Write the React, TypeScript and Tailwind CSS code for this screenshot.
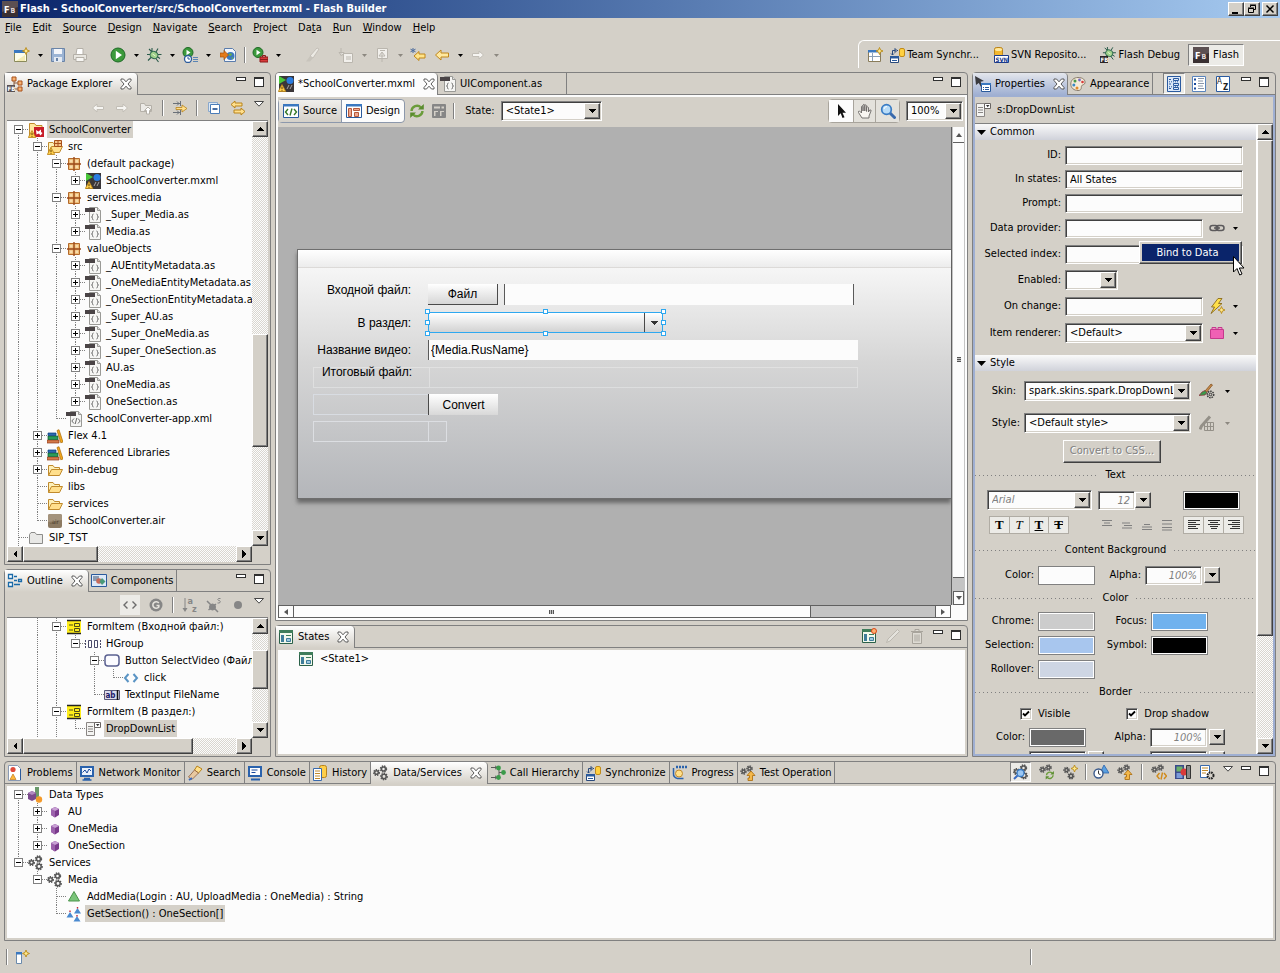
import type { ReactNode } from "react";

/* ─── Icon drawings, all on a 16×16 grid ─── */

const gear = (x: number, y: number, r = 3, c = "#555") => (
  <g>
    <circle cx={x} cy={y} r={r} fill="none" stroke={c} strokeWidth="1.4" strokeDasharray="1.4 1" />
    <circle cx={x} cy={y} r={r - 1} fill="none" stroke={c} strokeWidth="1.5" />
  </g>
);

const gears = (
  <g>
    {gear(3.5, 7.5, 2.8)}
    {gear(10.5, 4, 3)}
    {gear(11, 11.5, 3.2)}
  </g>
);

const sparkle = (x: number, y: number) => (
  <path
    d={`M${x} ${y - 3.5}l1 2.5 2.5 1-2.5 1-1 2.5-1-2.5-2.5-1 2.5-1z`}
    fill="#ffe88a"
    stroke="#b98a1a"
    strokeWidth=".9"
  />
);

const warn = (
  <g>
    <path d="M4 8.5l3.800 7H.3z" fill="#ffcf4a" stroke="#b9831a" strokeWidth=".8" />
    <path d="M4 10.8v2.2M4 13.8v1" stroke="#5a3a00" />
  </g>
);

const sheet = (
  <g>
    <path d="M4.500.500h8l3 3v12h-11z" fill="#f6f6f4" stroke="#9a9a96" />
    <path d="M12.500.500v3h3" fill="#ddd" stroke="#9a9a96" />
    <path d="M0 1h10v4H0z" fill="#4a4446" />
  </g>
);

const pkg = (
  <g>
    <path d="M2.500 2.500h11v11h-11z" fill="#eebd78" stroke="#b4692a" />
    <path d="M8 1v14M1 8h14" stroke="#9c4a1a" strokeWidth="1.400" />
    <path d="M4 4h2.500v2.500H4zM9.500 4H12v2.500H9.500zM4 9.500h2.500V12H4zM9.500 9.500H12V12H9.500z" fill="#f9dcab" />
  </g>
);

const openFolder = (
  <g>
    <path d="M1.500 13.500v-10h4.500l1.500 2h5v2.500" fill="#fdf0b8" stroke="#c08a2c" />
    <path d="M1.500 13.500l3-6h11l-3 6z" fill="#ffdf8c" stroke="#c08a2c" />
  </g>
);

const sync = (
  <g fill="none" strokeWidth="2.400">
    <path d="M2.500 8a5.500 5.500 0 0 1 9.500-3.500" stroke="#6a9c3a" />
    <path d="M13.500 8a5.500 5.500 0 0 1-9.500 3.500" stroke="#6a9c3a" />
    <path d="M9 6.500h5.800V1zM7 9.500H1.200V15z" fill="#5a8c2e" stroke="none" />
  </g>
);

const bug = (
  <g>
    <path d="M3 2l3 3M12 1.500L10 5M1 7.500h4M11 7.500h4.500M2 13.500L5.500 10M9.500 11l3 4M6 1v4M14 11.500L11 9.500" stroke="#2a5a4a" strokeWidth="1.100" />
    <ellipse cx="8" cy="8" rx="4" ry="3.500" fill="#9fd08a" stroke="#2f6b50" transform="rotate(30 8 8)" />
    <path d="M6.500 7l3 2" stroke="#e8f7d8" />
  </g>
);

const play = (
  <g>
    <circle cx="8" cy="8" r="7" fill="#3c9a3c" stroke="#1e6a26" />
    <path d="M5.800 3.800L12 8l-6.200 4.200z" fill="#fff" />
  </g>
);

const miniPlay = (
  <g>
    <circle cx="6" cy="5.500" r="5" fill="#3c9a3c" stroke="#1e6a26" />
    <path d="M4.500 2.800L8.500 5.500l-4 2.700z" fill="#fff" />
  </g>
);

const fb = (
  <g>
    <rect width="16" height="16" fill="#3a3032" />
    <path d="M0 0h16v6L0 11z" fill="#5c5052" />
    <text x="2" y="11.500" fontSize="9" fontWeight="bold" fill="#fff">F</text>
    <text x="8.500" y="11.500" fontSize="7" fontWeight="bold" fill="#e4dcdc">B</text>
  </g>
);

const syncDb = (
  <g>
    <path d="M1.500 9.500h8v6h-8z" fill="#fff" stroke="#2a4a7c" />
    <path d="M1 9h9v2.500H1zM3 13h5v1H3z" fill="#2a5a9c" />
    <path d="M3.500 8V3.500h3M2 6.500l1.500 1.500L5 6.500M6 1.500v4l2-2zM8 3.500h1" fill="none" stroke="#2a4a7c" />
    <rect x="10.500" y="1.500" width="5" height="8" rx="1.500" fill="#ffd040" stroke="#c08a1a" />
  </g>
);

const stateIcon = (
  <g>
    <path d="M1.500 1.500h13v13h-13z" fill="#f2f8ec" stroke="#2a6048" />
    <path d="M1 1h14v3H1z" fill="#3f7d5a" />
    <path d="M3 6h3v7H3z" fill="#3f7d9a" />
    <path d="M8 6.500h5" stroke="#3f7d5a" />
    <path d="M8.500 9.500h4v3h-4z" fill="#9cc8e0" stroke="#3f7d9a" />
  </g>
);

const ICONS: Record<string, ReactNode> = {
  gears,
  fb,
  sync,
  bug,
  play,
  syncDb,
  stateIcon,
  newWizard: (
    <g>
      <path d="M.5 3.500h12v11H.5z" fill="#fdfce8" stroke="#8a8a5a" />
      <path d="M0 3h11v3H0z" fill="#3a78c0" />
      <path d="M2 14l9-6v6z" fill="#f4ecb4" />
      {sparkle(12, 4)}
    </g>
  ),
  save: (
    <g>
      <path d="M1.500 1.500h13v13h-13z" fill="#9cb4d4" stroke="#6a84a8" />
      <path d="M4 2h8v5H4z" fill="#f4f6fa" />
      <path d="M4 10h8v5H4z" fill="#e4eaf2" />
      <path d="M6 11h2v3H6z" fill="#6a84a8" />
    </g>
  ),
  print: (
    <g stroke="#b4b0a8">
      <path d="M5 1.500h6v6H4z" fill="#fff" />
      <path d="M1.500 7.500h13v5h-13z" fill="#e8e6e0" />
      <path d="M4 10.500h8v4H4z" fill="#f8f7f4" />
    </g>
  ),
  profile: (
    <g>
      {miniPlay}
      <circle cx="6" cy="12" r="3.500" fill="#fff" stroke="#2a5a9c" strokeWidth="1.300" />
      <path d="M6 10v2h2" stroke="#2a5a9c" fill="none" />
      <path d="M11 10.500h5M11 12.500h5M11 14.500h5" stroke="#5a84b4" />
    </g>
  ),
  importWeb: (
    <g>
      <path d="M4.500 1.500h8l3 3v10h-11z" fill="#f2f6fc" stroke="#5a7cac" />
      <circle cx="10.500" cy="9" r="4" fill="#3a78c0" />
      <path d="M8 8l2-2 2 1-1 2zM11 11l2-1v2z" fill="#6ab04a" />
      <path d="M0 6h4V3.500L8.500 8 4 12.500V10H0z" fill="#e47a1a" stroke="#a8500a" strokeWidth=".7" />
    </g>
  ),
  external: (
    <g>
      {miniPlay}
      <path d="M8 10h8v5H8z" fill="#d83a3a" stroke="#8c1a1a" />
      <path d="M10.500 10V8.500h3V10M8 12.500h8" fill="none" stroke="#8c1a1a" />
    </g>
  ),
  brush: (
    <g>
      <path d="M13 1l2 1-6 9-3-2z" fill="#eceae4" stroke="#bcb8b0" strokeWidth=".8" />
      <path d="M6 9l3 2-3 3.500H2z" fill="#c8c4bc" />
    </g>
  ),
  stepDown: (
    <g stroke="#bab6ae" fill="#f2f0ec">
      <path d="M5.500 6.500h9v9h-9z" />
      <path d="M3 1v7M1 5.500L3.500 9 6 5.500zM8 10h5M8 12h5" />
    </g>
  ),
  stepUp: (
    <g stroke="#bab6ae" fill="#f2f0ec">
      <path d="M3.500 1.500h10v10h-10z" />
      <path d="M8 15V6M5 9l3-4 3 4zM6 3.500h5" />
    </g>
  ),
  arrowStar: (
    <g>
      <path d="M4 9l5-4.500V7h6v4H9v2.500z" fill="#ffe48a" stroke="#c0861a" />
      <path d="M3 1v5M.5 2.200l5 2.600M5.500 2.200l-5 2.600" stroke="#4a6a9c" />
    </g>
  ),
  arrowLeft: <path d="M1.500 8L7 3v3h7.500v4H7v3z" fill="#ffe9a0" stroke="#c0861a" />,
  arrowLeftDim: <path d="M2.500 8L7 4v2.500h6.500v3H7V12z" fill="#f6f5f2" stroke="#c2beb6" />,
  arrowRightDim: <path d="M13.500 8L9 4v2.500H2.500v3H9V12z" fill="#f6f5f2" stroke="#c2beb6" />,
  upFolder: (
    <g stroke="#b4b0a8" fill="#eceae6">
      <path d="M2.500 11.500v-8h4l1 2h6v6z" />
      <path d="M8.500 14V10.500h-2L10 7l3.500 3.500h-2V14z" fill="#fff" />
    </g>
  ),
  focusTask: (
    <g>
      <path d="M1 3.500h7M5 1.500l2 2-2 2M1 12.500h7M5 10.500l2 2-2 2M8.500 1v5M8.500 10v5" stroke="#6a7078" fill="none" />
      <path d="M4 7.500h6V5l5 3.500-5 3.500V9.500H4z" fill="#ffdf8c" stroke="#b9831a" strokeWidth=".8" />
    </g>
  ),
  collapseAll: (
    <g stroke="#4a7cb8">
      <path d="M2.500 2.500h9v9h-9z" fill="#dce8f4" stroke="#8aa8cc" />
      <path d="M4.500 4.500h9v9h-9z" fill="#fff" />
      <path d="M6.500 9h5" strokeWidth="1.600" stroke="#1a4a8c" />
    </g>
  ),
  linkEditor: (
    <g fill="#ffdf8c" stroke="#b9831a">
      <path d="M1 4.500L5 1v2h7v3H5v2z" />
      <path d="M15 11.500L11 8v2H4v3h7v2z" />
    </g>
  ),
  perspective: (
    <g>
      <path d="M1.500 3.500h12v11h-12z" fill="#fff" stroke="#8a7c5a" />
      <path d="M1 3h10v2.500H1z" fill="#3a78c0" />
      <path d="M5.500 6v8M2 9.500h11" stroke="#8aa0b8" />
      {sparkle(12.5, 4)}
    </g>
  ),
  svn: (
    <g>
      <rect x="1.500" y=".5" width="8" height="9" rx="2" fill="#f4b830" stroke="#b9831a" />
      <ellipse cx="5.500" cy="2.500" rx="3.500" ry="1.500" fill="#ffe9a0" />
      <path d="M1.500 8.500h14v7h-14z" fill="#fff" stroke="#1a3a8c" />
      <text x="2.500" y="14.500" fontSize="6" fontWeight="bold" fill="#1a3a8c">SVN</text>
    </g>
  ),
  flashDebug: (
    <g>
      <g transform="translate(2 -1) scale(.9)">{bug}</g>
      <path d="M0 9h8v7H0z" fill="#2a2426" />
      <text x=".5" y="15" fontSize="6" fontWeight="bold" fill="#fff">FB</text>
    </g>
  ),
  pkgExplorer: (
    <g>
      <path d="M5 1h4v4H5zM11 5h4v4h-4zM11 11h4v4h-4z" fill="#f6b070" stroke="#a8501a" />
      <path d="M7 5v8h4M7 7h4" fill="none" stroke="#8a5a3a" />
      <path d="M0 9h8v7H0z" fill="#5a5254" />
      <text x=".5" y="15" fontSize="6" fontWeight="bold" fill="#fff">FB</text>
    </g>
  ),
  project: (
    <g>
      <path d="M1.500 13.500v-12h5l1.500 2h6v10z" fill="#ffe9a0" stroke="#c08a2c" />
      <path d="M6 5h10v10H6z" fill="#c81e2a" />
      <path d="M8 8l2.500 1.500L13 7.500v2.500l1.500 1-2 2.500-1.500-2-2.500 1z" fill="#fff" />
      {warn}
    </g>
  ),
  srcFolder: (
    <g>
      {openFolder}
      <path d="M7.500 1.500h7v6h-7z" fill="#f6c68a" stroke="#a8501a" />
      <path d="M11 1v7M7 4.500h8" stroke="#a8501a" />
      {warn}
    </g>
  ),
  pkg,
  mxml: (
    <g>
      <path d="M1 0h15v16H1z" fill="#3a3638" />
      <path d="M1 0l7 4-7 4z" fill="#4ac83a" />
      <circle cx="12" cy="4.500" r="3.500" fill="#2a7ce0" />
      <path d="M9 13l2-4M12 13l2-4" stroke="#a8a4a6" />
      {warn}
    </g>
  ),
  as: (
    <g>
      {sheet}
      <path d="M8.500 7q-1 0-1 1.500T6.500 10q1 0 1 1.500t1 1.500M11.500 7q1 0 1 1.500t1 1.500q-1 0-1 1.500t-1 1.500" fill="none" stroke="#6a6a6a" />
    </g>
  ),
  xml: (
    <g>
      {sheet}
      <path d="M8 7.500L5.800 10 8 12.500M12 7.500l2.200 2.500L12 12.500M10.800 7l-1.600 6" fill="none" stroke="#6a6a6a" />
    </g>
  ),
  library: (
    <g>
      <path d="M0 12h12v3H0z" fill="#d47a4a" stroke="#8c3a1a" strokeWidth=".7" />
      <path d="M1 8h10v3.500H1z" fill="#2a9a5a" stroke="#0a5a2a" strokeWidth=".7" />
      <path d="M1 5h8v2.500H1z" fill="#2a6ab0" stroke="#0a3a7c" strokeWidth=".7" />
      <path d="M10 2.500l2-.8L16 14l-2.200.8z" fill="#f4a81a" stroke="#a86a0a" strokeWidth=".7" />
    </g>
  ),
  folder: openFolder,
  air: (
    <g>
      <rect x="1" y="1" width="14" height="14" rx="2" fill="#8c7a62" />
      <path d="M1 3q0-2 2-2h10q2 0 2 2v4L1 9z" fill="#a4937c" />
      <text x="3" y="11" fontSize="6" fill="#4a3a2a">.air</text>
    </g>
  ),
  closedProject: (
    <path d="M1.500 13.500v-9l1.500-2h4l1.500 2h6v9z" fill="#e8e8e6" stroke="#8c8c8a" />
  ),
  outline: (
    <g stroke="#1a6aa8" fill="#fff">
      <path d="M1.500 1.500h4v4h-4zM1.500 9.500h4v4h-4z" strokeWidth="1.300" />
      <path d="M7 3.500h3M7 11.500h6M11.500 6.500h3v2h-3zM7 7.500h3" strokeWidth="1.300" />
    </g>
  ),
  components: (
    <g>
      <path d="M.5 1.500h15v12H.5z" fill="#dce8f8" stroke="#2a5a9c" />
      <path d="M2 3h6v5H2z" fill="#8a9ab0" />
      <circle cx="8" cy="8" r="2.800" fill="#c86a5a" />
      <path d="M11 5l3.500 3.500L11 12 8.500 8.500z" fill="#4a9a7a" />
    </g>
  ),
  tag: <path d="M5.500 4.500L2 8l3.500 3.500M10.500 4.500L14 8l-3.500 3.500" fill="none" stroke="#6c6c6c" strokeWidth="1.400" />,
  tagBlue: <path d="M5.500 4L2 8l3.500 4M10.500 4L14 8l-3.500 4" fill="none" stroke="#5a94c4" strokeWidth="2" />,
  classC: (
    <g>
      <circle cx="8" cy="8" r="6.500" fill="#868686" />
      <path d="M10.800 6A3.300 3.300 0 1 0 10.800 10V8.500H8.500" fill="none" stroke="#e4e2dc" strokeWidth="1.600" />
    </g>
  ),
  sortAz: (
    <g fill="#868686">
      <path d="M2.500 1h1v10h2L3 15 .5 11h2z" />
      <text x="5.500" y="7" fontSize="9" fontWeight="bold">a</text>
      <text x="10" y="15" fontSize="9" fontWeight="bold">z</text>
    </g>
  ),
  hideStatic: (
    <g stroke="#868686" fill="none">
      <circle cx="6.500" cy="10" r="3" fill="#868686" />
      <path d="M1 4l11 11M2.500 13L10 7" strokeWidth="1.500" />
      <path d="M14.500 1.500h-2q-1.500 1.500 0 2h1q1.500 1 0 2.500h-2" />
    </g>
  ),
  dot: <circle cx="8" cy="8" r="4" fill="#868686" />,
  formItem: (
    <g>
      <path d="M1 2h14v12H1z" fill="#ffee1a" />
      <path d="M1 1.500h14M1 14.500h14" stroke="#222" strokeWidth="1.500" />
      <path d="M3 6h4M8.500 4.500h5v3h-5zM3 11h4M8.500 9.500h5v3h-5z" stroke="#4a4a1a" fill="none" />
    </g>
  ),
  hgroup: (
    <g fill="none" stroke="#4a4a6a">
      <path d="M3.500 4.500h3v7h-3zM9.500 4.500h3v7h-3z" fill="#fff" />
      <path d="M.5 4v8M15.500 4v8" strokeDasharray="2 1" />
    </g>
  ),
  button: <rect x="1" y="2" width="14" height="11" rx="3" fill="#fbfbff" stroke="#5a6090" strokeWidth="1.500" />,
  textInput: (
    <g>
      <path d="M.5 3.500h15v9H.5z" fill="#dcdcec" stroke="#5a5a7a" />
      <text x="1.500" y="11" fontSize="8" fontWeight="bold" fill="#1a1a6a">ab</text>
      <path d="M13.500 3v10" stroke="#111" strokeWidth="1.500" />
    </g>
  ),
  dropDown: (
    <g>
      <path d="M1.500 1.500h8v13h-8z" fill="#f4f4f2" stroke="#8a8684" />
      <path d="M3 5.500h5M3 8h5M3 10.500h5" stroke="#8a8684" />
      <path d="M9.500 1.500h6v5h-6z" fill="#fff" stroke="#6a6664" />
      <path d="M11 3h3.500L12.700 5.200z" fill="#333" />
    </g>
  ),
  source: (
    <g>
      <path d="M.5 1.500h15v13H.5z" fill="#fff" stroke="#2a5a9c" />
      <path d="M0 1h16v2.500H0z" fill="#3a78c0" />
      <path d="M5 6L2.500 9 5 12M11 6l2.500 3L11 12M9 5.500L7 12.500" fill="none" stroke="#3a7a2a" strokeWidth="1.400" />
    </g>
  ),
  design: (
    <g>
      <path d="M.5 1.500h15v13H.5z" fill="#fff" stroke="#2a5a9c" />
      <path d="M0 1h16v2.500H0z" fill="#3a78c0" />
      <path d="M2.500 5.500h3v8h-3zM7.500 5.500h6v2h-6zM8.500 9.500h4v4h-4z" fill="#f0a890" stroke="#b4583a" />
    </g>
  ),
  skins: (
    <g>
      <rect x="1" y="1" width="14" height="14" rx="1" fill="#868686" />
      <path d="M3 3.500h6v2H3zM10.500 3.500h2.500v2h-2.500zM3 8h4v1H3zM9 8h4v1H9zM3 9v4h1.500V9zM9 9v4h1.500V9z" fill="#d4d0c8" />
    </g>
  ),
  cursor: (
    <path d="M5 1v12l2.700-2.700L9.500 15l2-.8-2-4.400H13z" fill="#111" />
  ),
  hand: (
    <path
      d="M5 15L1.500 9.500Q1 8 2.500 8L4.500 10V3.500Q5.200 2 6 3.500V8 2Q7 .5 7.800 2v6V2.500Q9 1 9.600 2.500V8.500 4.500q1-1.200 1.900 0V9l1.200-2q1.800-.5 1.300 1L12 13v2z"
      fill="#f8f6f2"
      stroke="#6a6664"
      strokeWidth=".9"
    />
  ),
  magnifier: (
    <g>
      <path d="M9.500 9.500l5 5" stroke="#3a6aac" strokeWidth="3" strokeLinecap="round" />
      <circle cx="6.500" cy="6.500" r="4.800" fill="#b8dcf8" stroke="#3a7cc4" strokeWidth="1.700" />
      <path d="M4 6a3 3 0 0 1 3-2.500" fill="none" stroke="#fff" />
    </g>
  ),
  newState: (
    <g>
      {stateIcon}
      <circle cx="13" cy="3" r="2.500" fill="#ffb070" stroke="#d8481a" />
    </g>
  ),
  pencil: <path d="M12.500 1.500l2 2L5 13l-3.500 1.500L3 11z" fill="#e4e2dc" stroke="#bcb8b0" />,
  trash: (
    <g stroke="#a8a49c" fill="#dedbd4">
      <path d="M3.500 4.500h9v11h-9z" />
      <path d="M2 3.500h12M6 3V1.500h4V3M6 6.500v7M8 6.500v7M10 6.500v7" />
    </g>
  ),
  properties: (
    <g>
      <path d="M0 0l9 5-3.500.8L8 10 6 11 3.800 7 1 9z" fill="#3a3a3e" />
      <path d="M6.500 7.500h9v8h-9z" fill="#fff" stroke="#2a5a9c" />
      <path d="M6 7h10v2H6z" fill="#3a78c0" />
      <path d="M8 11.500h1M10 11.500h4M8 13.500h1M10 13.500h4" stroke="#2a5a9c" />
    </g>
  ),
  palette: (
    <g>
      <path d="M8 1.500c5 0 7.500 2.500 7 5.500-.5 2-3 1.500-3.500 3S12 14.500 8 14.500 .8 12 .8 8 4 1.500 8 1.500z" fill="#f4ead8" stroke="#8a7c6c" />
      <circle cx="5" cy="5" r="1.500" fill="#4a9a4a" />
      <circle cx="9.500" cy="4" r="1.400" fill="#7a6ac0" />
      <circle cx="3.800" cy="9" r="1.500" fill="#3a8ac8" />
      <circle cx="7" cy="12" r="1.500" fill="#e48a2a" />
      <circle cx="12.500" cy="6" r="1.300" fill="#d83a3a" />
    </g>
  ),
  category: (
    <g fill="none" stroke="#2a5aa0">
      <path d="M1.500.500h13v15h-13z" fill="#dce8f8" />
      <path d="M3 3.500h2M7.500 2.500h5v2h-5zM3 8h2M7.500 7.500h5v2h-5zM3 12.500h2M7.500 11.500h5v2h-5z" />
      <path d="M3 5.800h10M3 10.800h10" strokeDasharray="1 1" />
    </g>
  ),
  listView: (
    <g>
      <path d="M1.500.500h13v15h-13z" fill="#fff" stroke="#5a84bc" />
      <path d="M3 3.500h2M3 8h2M3 12.500h2" stroke="#1a4a9c" strokeWidth="2" />
      <path d="M7 2.500h6M7 5h5M7 7.500h6M7 10h5M7 12.500h6" stroke="#8a96a8" />
    </g>
  ),
  alphaView: (
    <g>
      <path d="M1.500.500h13v15h-13z" fill="#fff" stroke="#2a5aa0" />
      <text x="2" y="8" fontSize="8" fill="#222">A</text>
      <text x="8" y="14" fontSize="8" fontWeight="bold" fill="#222">Z</text>
    </g>
  ),
  link: (
    <g fill="none" stroke="#5c5a5c" strokeWidth="1.500">
      <rect x="1" y="5.500" width="8" height="5" rx="2.500" />
      <rect x="7" y="5.500" width="8" height="5" rx="2.500" />
      <path d="M5 8h6" />
    </g>
  ),
  lightning: (
    <g>
      <path d="M9 .5h4L9.500 5.500H13L2 15.500 5.500 9H2.500z" fill="#ffe04a" stroke="#8a6a1a" strokeWidth=".9" />
      {sparkle(12.5, 12)}
    </g>
  ),
  brick: (
    <g>
      <path d="M1.500 4.500h13v9h-13z" fill="#f060b4" stroke="#c43a8c" />
      <path d="M3 2.500h4v2H3zM9 2.500h4v2H9z" fill="#f890cc" stroke="#c43a8c" />
    </g>
  ),
  paintGear: (
    <g>
      <path d="M12 1L6 8l1.500 1.500L13.500 2z" fill="#c88a4a" stroke="#7a4a1a" strokeWidth=".7" />
      <path d="M6 7.500L8 9.500 6 12 0 12.500 3 9z" fill="#3a9a4a" stroke="#8c2a3a" strokeWidth=".7" />
      <circle cx="11.500" cy="11.500" r="3.200" fill="#d4d0c8" stroke="#333" strokeWidth="1.500" strokeDasharray="1.500 .9" />
      <circle cx="11.500" cy="11.500" r="1.300" fill="none" stroke="#333" />
    </g>
  ),
  pencilGrid: (
    <g stroke="#949088" fill="none">
      <path d="M11 1.500L2.500 11 1 14.500" strokeWidth="3" />
      <path d="M5.500 7.500h9v8h-9zM8.500 8v7M11.500 8v7M5 11.500h10" />
    </g>
  ),
  problems: (
    <g>
      <path d="M1.500.500h9l3 3v12h-12z" fill="#fff" stroke="#8a9ab4" />
      <circle cx="6" cy="4.500" r="2.600" fill="#e04a3a" />
      <path d="M6 9l3 5.500H3z" fill="#ffb83a" stroke="#c07a1a" strokeWidth=".7" />
      <path d="M13.500 4v11" stroke="#2a5a9c" />
    </g>
  ),
  monitor: (
    <g>
      <path d="M1 1h14v11H1z" fill="#2a62ac" />
      <path d="M3 3h10v7H3z" fill="#eaf2fc" />
      <path d="M3.500 7.500L6 5l2 3 2-4 2 2" fill="none" stroke="#1a4a9c" />
      <path d="M5 13.500h6M3.500 15h9" stroke="#2a62ac" strokeWidth="1.300" />
    </g>
  ),
  search: (
    <g>
      <path d="M10 1l5 3-3.500 4-4-3z" fill="#ffe08a" stroke="#b9831a" />
      <path d="M7.500 5l4 3L5 14.500 1.500 12z" fill="#e8c8a0" stroke="#8a5a3a" strokeWidth=".8" />
      <path d="M2 15l3-2" stroke="#3a6ac0" strokeWidth="2" />
    </g>
  ),
  console: (
    <g>
      <path d="M1 1h14v11H1z" fill="#2a62ac" />
      <path d="M3 3h10v7H3z" fill="#fff" />
      <path d="M4.500 5h6M4.500 7.500h4" stroke="#1a4a9c" />
      <path d="M4 14.500h9" stroke="#2a62ac" strokeWidth="2" />
    </g>
  ),
  history: (
    <g>
      <rect x="7.500" y=".5" width="7" height="12" rx="2" fill="#ffcf4a" stroke="#b9831a" />
      <path d="M1.500 3.500h8v12h-8z" fill="#fff" stroke="#3a6aac" />
      <path d="M3 6h5M3 8.500h5M3 11h5M3 13.500h5" stroke="#c08a2c" />
    </g>
  ),
  hierarchy: (
    <g>
      <path d="M1 2.500h6M5 .8L7 2.500 5 4.200M9 3v9M9 7.500h4M1 12.500h6M5 10.800l2 1.700-2 1.700" fill="none" stroke="#5a5a5a" />
      <circle cx="8.500" cy="3" r="2.400" fill="#3a9a4a" />
      <circle cx="13.500" cy="7.500" r="2.400" fill="#3a9a4a" />
      <circle cx="8.500" cy="12.500" r="2.400" fill="#3a9a4a" />
    </g>
  ),
  progress: (
    <g>
      <path d="M11.500 13.500h-6a4.500 4.500 0 0 1-4-5V3" fill="none" stroke="#2a62ac" strokeWidth="1.500" />
      <circle cx="7" cy="8.500" r="3.500" fill="#ffe08a" stroke="#c08a2c" />
      <path d="M4 2h12" stroke="#2a62ac" strokeWidth="2.400" strokeDasharray="2 1" />
    </g>
  ),
  testOp: (
    <g>
      {gear(3.5, 6.5, 2.5)}
      {gear(9.5, 3.5, 2.6)}
      <path d="M8 15.500h4.500V10.500H15L11 6 7 10.500h2.500V13H8z" fill="#f4b84a" stroke="#a86a0a" strokeWidth=".8" />
    </g>
  ),
  gearsFind: (
    <g>
      {gears}
      <path d="M1 15l4-4" stroke="#3a6ac0" strokeWidth="2" />
      <circle cx="7.500" cy="9" r="3.500" fill="#9cc8f4" stroke="#3a7cc4" strokeWidth="1.300" />
    </g>
  ),
  gearsSync: (
    <g>
      {gear(3.5, 5.5, 2.6)}
      {gear(9.5, 3.5, 2.6)}
      <g transform="translate(6 6.500) scale(.6)">{sync}</g>
    </g>
  ),
  gearsNew: (
    <g>
      {gear(3.5, 6, 2.6)}
      {gear(8, 12, 2.8)}
      {sparkle(11.5, 4.5)}
    </g>
  ),
  typeClock: (
    <g>
      <path d="M11 1l5 8H7z" fill="#5aa0e0" stroke="#2a62ac" strokeWidth=".8" />
      <circle cx="5.500" cy="9.500" r="4.500" fill="#fff" stroke="#3a5a8c" strokeWidth="1.400" />
      <path d="M5.500 6.500v3.200l2 1" fill="none" stroke="#333" />
    </g>
  ),
  gearsCode: (
    <g>
      {gear(3.5, 5.5, 2.6)}
      {gear(9.5, 3.5, 2.6)}
      <path d="M8.500 9L6 12l2.500 3M13 9l2.500 3-2.500 3M11.500 8.500l-1.500 7" fill="none" stroke="#d08a1a" strokeWidth="1.400" />
    </g>
  ),
  filmstrip: (
    <g>
      <path d="M0 1h9v14H0z" fill="#3a4a8c" />
      <path d="M1.500 2.500h6v5h-6z" fill="#6ab06a" />
      <path d="M1.500 9h6v5h-6z" fill="#7a9ad8" />
      <circle cx="9" cy="8" r="3.500" fill="#d83a3a" />
      <path d="M11.500 1.500h4v13h-4z" fill="#888" stroke="#333" />
    </g>
  ),
  docGear: (
    <g>
      <path d="M1.500 1.500h9v12h-9z" fill="#fff" stroke="#3a6aac" />
      <path d="M3 4h6M3 6.500h6M3 9h4" stroke="#c08a2c" />
      <circle cx="11.500" cy="11.500" r="3" fill="#d4d0c8" stroke="#222" strokeWidth="2" strokeDasharray="1.600 .8" />
    </g>
  ),
  dataTypes: (
    <g>
      <path d="M7 0h4v9q0 2-2 2H7z" fill="#6a9a6a" />
      <path d="M0 6l4-2 4 2v6l-4 2-4-2z" fill="#7a4a8c" />
      <path d="M0 6l4 2 4-2-4-2z" fill="#b08ac0" />
      <circle cx="11" cy="12.500" r="3.200" fill="#f49a2a" />
    </g>
  ),
  cube: (
    <g>
      <path d="M4 5l4-2 4 2v6l-4 2.500L4 11z" fill="#7a3a8c" />
      <path d="M4 5l4 2v6.500L4 11z" fill="#9c62ac" />
      <path d="M4 5l4 2 4-2-4-2z" fill="#c8a0d4" />
    </g>
  ),
  operation: <path d="M8 2.500l5.500 9.500h-11z" fill="#7ac47a" stroke="#4a944a" />,
  typedOperation: (
    <g fill="#4a8ad0">
      <path d="M4 6l3.500 5.500h-7zM11 10l3.500 5.500h-7zM11.500 2l3.500 5.500H8z" />
      <path d="M3.300 5.200h1.400M10.800 1.700h1.400M10.300 9.800h1.400" stroke="#c8283a" strokeWidth="1.400" />
    </g>
  ),
  fastView: (
    <g>
      <path d="M2.500 3.500h5v11h-5z" fill="#fff" stroke="#6a8aac" />
      <path d="M2 3h6v2.500H2z" fill="#3a78c0" />
      {sparkle(12, 4.5)}
    </g>
  ),
};

function Icon({ name }: { name: string }) {
  return (
    <svg viewBox="0 0 16 16" className="size-4 shrink-0" aria-hidden="true">
      {ICONS[name]}
    </svg>
  );
}

/* ─── Small shared controls ─── */

const RAISED = "border border-t-white border-l-white border-r-[#404040] border-b-[#404040] bg-[#d4d0c8] shadow-[inset_-1px_-1px_#808080]";
const SUNKEN = "border border-t-[#808080] border-l-[#808080] border-r-white border-b-white bg-[#fcfcfc] shadow-[inset_1px_1px_#404040,inset_-1px_-1px_#d4d0c8]";
const PRESSED = "border border-t-[#808080] border-l-[#808080] border-r-white border-b-white bg-[#ecebe7]";
const TRACK = "bg-[repeating-conic-gradient(#fcfcfc_0_25%,#d9d6cf_0_50%)] bg-[length:2px_2px]";

const ARROWS = {
  up: "M4 10h8L8 6z",
  down: "M4 6h8l-4 4z",
  left: "M10 4v8L6 8z",
  right: "M6 4v8l4-4z",
};

function Arrow({ dir, color = "#000" }: { dir: keyof typeof ARROWS; color?: string }) {
  return (
    <svg viewBox="0 0 16 16" className="size-4 shrink-0" aria-hidden="true" shapeRendering="crispEdges">
      <path d={ARROWS[dir]} fill={color} />
    </svg>
  );
}

function IconButton({ icon, label, className = "" }: { icon: string; label: string; className?: string }) {
  return (
    <button type="button" aria-label={label} className={`flex shrink-0 items-center justify-center ${className}`}>
      <Icon name={icon} />
    </button>
  );
}

function MenuArrow({ label, dim }: { label: string; dim?: boolean }) {
  return (
    <button type="button" aria-label={label} className="flex h-4 w-2 shrink-0 items-center justify-center">
      <svg viewBox="0 0 5 3" className="h-[3px] w-[5px]" aria-hidden="true">
        <path d="M0 0h5L2.500 3z" fill={dim ? "#8c8880" : "#000"} />
      </svg>
    </button>
  );
}

function Separator({ className = "" }: { className?: string }) {
  return <span className={`h-4 w-0.5 shrink-0 border-l border-[#808080] bg-white ${className}`} />;
}

function MinMax() {
  return (
    <span className="flex shrink-0 items-start gap-2 pr-1.5">
      <button type="button" aria-label="Minimize" className="h-1 w-2.5 border border-[#303030] bg-white" />
      <button type="button" aria-label="Maximize" className="h-2.5 w-2.5 border border-t-2 border-[#303030] bg-white" />
    </span>
  );
}

function ViewMenu() {
  return (
    <button type="button" aria-label="View menu" className="shrink-0">
      <svg viewBox="0 0 10 6" className="h-1.5 w-2.5" aria-hidden="true">
        <path d="M.5.500h9L5 5.200z" fill="#fff" stroke="#333" strokeWidth=".9" />
      </svg>
    </button>
  );
}

type TabProps = { icon: string; label: string; active?: boolean; closable?: boolean; tone?: "white" | "gray" | "blue"; pad?: string };

const TONES = {
  white: "bg-[#fcfcfc]",
  gray: "bg-linear-to-b from-white to-[#d4d0c8]",
  blue: "bg-linear-to-b from-[#e4e6ec] to-[#9fafd2]",
};

function Tab({ icon, label, active, closable, tone = "gray", pad = "pr-[3px]" }: TabProps) {
  return (
    <button
      type="button"
      role="tab"
      aria-selected={!!active}
      className={`flex h-[22px] shrink-0 items-center gap-1 border-r border-[#808080] pl-0.5 whitespace-nowrap ${pad} ${active ? `${TONES[tone]} rounded-tr-sm` : "border-b"}`}
    >
      <Icon name={icon} />
      <span>{label}</span>
      {closable && (
        <svg viewBox="0 0 12 12" className="mr-0.5 ml-1 size-3 shrink-0" aria-hidden="true">
          <path d="M1 1h2.500L6 3.800 8.500 1H11v1.500L8 6l3 3.500V11H8.500L6 8.200 3.500 11H1V9.500L4 6 1 2.500z" fill="#fff" stroke="#4a4a4a" strokeWidth=".9" />
        </svg>
      )}
    </button>
  );
}

function TabStrip({ tabs, children }: { tabs: TabProps[]; children?: ReactNode }) {
  return (
    <div className="flex h-[22px] shrink-0" role="tablist">
      {tabs.map((t) => (
        <Tab key={t.label} {...t} />
      ))}
      <div className="flex min-w-0 flex-1 items-start justify-end gap-2 border-b border-[#808080] pt-1">{children ?? <MinMax />}</div>
    </div>
  );
}

type BarProps = { before: string; thumb: string; label: string };

function VBar({ before, thumb, label }: BarProps) {
  return (
    <div role="scrollbar" aria-label={label} aria-valuenow={0} aria-controls="workbench" className={`flex w-4 shrink-0 flex-col ${TRACK}`}>
      <button type="button" aria-label="Scroll up" className={`flex h-4 shrink-0 items-center justify-center ${RAISED}`}>
        <Arrow dir="up" />
      </button>
      <div className="min-h-0 flex-1">
        <div className={before} />
        <div className={`${RAISED} ${thumb}`} />
      </div>
      <button type="button" aria-label="Scroll down" className={`flex h-4 shrink-0 items-center justify-center ${RAISED}`}>
        <Arrow dir="down" />
      </button>
    </div>
  );
}

function HBar({ thumb, label }: { thumb: string; label: string }) {
  return (
    <div className="flex h-4 shrink-0 pr-4">
      <div role="scrollbar" aria-label={label} aria-valuenow={0} aria-controls="workbench" className={`flex flex-1 ${TRACK}`}>
        <button type="button" aria-label="Scroll left" className={`flex w-4 shrink-0 items-center justify-center ${RAISED}`}>
          <Arrow dir="left" />
        </button>
        <div className="flex flex-1">
          <div className={`${RAISED} ${thumb}`} />
        </div>
        <button type="button" aria-label="Scroll right" className={`flex w-4 shrink-0 items-center justify-center ${RAISED}`}>
          <Arrow dir="right" />
        </button>
      </div>
    </div>
  );
}

/* ─── Trees ─── */

type Node = { d: number; icon: string; label: string; box?: "+" | "-"; selected?: boolean };

// Is there another row at this depth further down, before the branch ends?
function continues(rows: Node[], i: number, depth: number, open: number[]) {
  for (let k = i + 1; k < rows.length; k++) {
    if (rows[k].d < depth) return false;
    if (rows[k].d === depth) return true;
  }
  return open.includes(depth);
}

function Tree({ rows, label, open = [], from = 0 }: { rows: Node[]; label: string; open?: number[]; from?: number }) {
  return (
    <ul role="tree" aria-label={label} className="min-w-0 flex-1 overflow-hidden bg-[#fcfcfc] pl-0.5">
      {rows.map((row, i) => (
        <li key={i} role="treeitem" aria-selected={!!row.selected} className="flex h-[17px] items-center whitespace-nowrap">
          {Array.from({ length: row.d + 1 }, (_, depth) => {
            const own = depth === row.d;
            const down = continues(rows, i, depth, open);
            const first = own && i === 0 && from === 0;
            return (
              <svg key={depth} viewBox="0 0 19 17" className="h-[17px] w-[19px] shrink-0" aria-hidden="true" shapeRendering="crispEdges">
                <g stroke="#808080" strokeDasharray="1 1">
                  {((own && !first) || (!own && down)) && <path d="M9.500 0v9" />}
                  {down && <path d="M9.500 8v9" />}
                  {own && <path d="M10 8.500h9" />}
                </g>
                {own && row.box && (
                  <g stroke="#808080">
                    <path d="M5.500 4.500h8v8h-8z" fill="#fff" />
                    <path d={row.box === "+" ? "M7 8.500h5M9.500 6v5" : "M7 8.500h5"} stroke="#000" />
                  </g>
                )}
              </svg>
            );
          })}
          <Icon name={row.icon} />
          <span className={`ml-[3px] px-0.5 leading-[17px] ${row.selected ? "bg-[#d4d0c8]" : ""}`}>{row.label}</span>
        </li>
      ))}
    </ul>
  );
}

const PACKAGES: Node[] = [
  { d: 0, icon: "project", label: "SchoolConverter", box: "-", selected: true },
  { d: 1, icon: "srcFolder", label: "src", box: "-" },
  { d: 2, icon: "pkg", label: "(default package)", box: "-" },
  { d: 3, icon: "mxml", label: "SchoolConverter.mxml", box: "+" },
  { d: 2, icon: "pkg", label: "services.media", box: "-" },
  { d: 3, icon: "as", label: "_Super_Media.as", box: "+" },
  { d: 3, icon: "as", label: "Media.as", box: "+" },
  { d: 2, icon: "pkg", label: "valueObjects", box: "-" },
  { d: 3, icon: "as", label: "_AUEntityMetadata.as", box: "+" },
  { d: 3, icon: "as", label: "_OneMediaEntityMetadata.as", box: "+" },
  { d: 3, icon: "as", label: "_OneSectionEntityMetadata.as", box: "+" },
  { d: 3, icon: "as", label: "_Super_AU.as", box: "+" },
  { d: 3, icon: "as", label: "_Super_OneMedia.as", box: "+" },
  { d: 3, icon: "as", label: "_Super_OneSection.as", box: "+" },
  { d: 3, icon: "as", label: "AU.as", box: "+" },
  { d: 3, icon: "as", label: "OneMedia.as", box: "+" },
  { d: 3, icon: "as", label: "OneSection.as", box: "+" },
  { d: 2, icon: "xml", label: "SchoolConverter-app.xml" },
  { d: 1, icon: "library", label: "Flex 4.1", box: "+" },
  { d: 1, icon: "library", label: "Referenced Libraries", box: "+" },
  { d: 1, icon: "folder", label: "bin-debug", box: "+" },
  { d: 1, icon: "folder", label: "libs" },
  { d: 1, icon: "folder", label: "services" },
  { d: 1, icon: "air", label: "SchoolConverter.air" },
  { d: 0, icon: "closedProject", label: "SIP_TST" },
];

const OUTLINE: Node[] = [
  { d: 2, icon: "formItem", label: "FormItem (Входной файл:)", box: "-" },
  { d: 3, icon: "hgroup", label: "HGroup", box: "-" },
  { d: 4, icon: "button", label: "Button SelectVideo (Файл)", box: "-" },
  { d: 5, icon: "tagBlue", label: "click" },
  { d: 4, icon: "textInput", label: "TextInput FileName" },
  { d: 2, icon: "formItem", label: "FormItem (В раздел:)", box: "-" },
  { d: 3, icon: "dropDown", label: "DropDownList", selected: true },
];

const SERVICES: Node[] = [
  { d: 0, icon: "dataTypes", label: "Data Types", box: "-" },
  { d: 1, icon: "cube", label: "AU", box: "+" },
  { d: 1, icon: "cube", label: "OneMedia", box: "+" },
  { d: 1, icon: "cube", label: "OneSection", box: "+" },
  { d: 0, icon: "gears", label: "Services", box: "-" },
  { d: 1, icon: "gears", label: "Media", box: "-" },
  { d: 2, icon: "operation", label: "AddMedia(Login : AU, UploadMedia : OneMedia) : String" },
  { d: 2, icon: "typedOperation", label: "GetSection() : OneSection[]", selected: true },
];

/* ─── Window chrome ─── */

// [before, underlined letter, after]
const MENUS = [
  ["", "F", "ile"],
  ["", "E", "dit"],
  ["", "S", "ource"],
  ["", "D", "esign"],
  ["", "N", "avigate"],
  ["", "S", "earch"],
  ["", "P", "roject"],
  ["Da", "t", "a"],
  ["", "R", "un"],
  ["", "W", "indow"],
  ["", "H", "elp"],
];

function TitleBar() {
  return (
    <header className="flex h-[18px] items-center bg-linear-to-r from-[#0a246a] to-[#a6caf0] px-0.5 text-white">
      <Icon name="fb" />
      <h1 className="ml-0.5 flex-1 font-bold whitespace-nowrap">Flash - SchoolConverter/src/SchoolConverter.mxml - Flash Builder</h1>
      <button type="button" aria-label="Minimize window" className={`h-3.5 w-4 ${RAISED}`}>
        <svg viewBox="0 0 14 12" aria-hidden="true"><path d="M3 9h6v2H3z" /></svg>
      </button>
      <button type="button" aria-label="Restore window" className={`h-3.5 w-4 ${RAISED}`}>
        <svg viewBox="0 0 14 12" aria-hidden="true" fill="none" stroke="#000"><path d="M5.500 4V2.500h5v4H9M3.500 5.500h5v4h-5zM5 2h6M3 5h6" /></svg>
      </button>
      <button type="button" aria-label="Close window" className={`ml-0.5 h-3.5 w-4 ${RAISED}`}>
        <svg viewBox="0 0 14 12" aria-hidden="true" fill="none" stroke="#000" strokeWidth="1.500"><path d="M3.500 2.500l7 7M10.500 2.500l-7 7" /></svg>
      </button>
    </header>
  );
}

function MenuBar() {
  return (
    <nav className="flex h-5 items-center gap-[11px] pl-[5px]">
      {MENUS.map(([a, u, b]) => (
        <button key={a + u + b} type="button">
          {a}
          <span className="underline">{u}</span>
          {b}
        </button>
      ))}
    </nav>
  );
}

function ToolBar() {
  return (
    <div className="flex h-[34px]">
      <div className="flex flex-1 items-center gap-1.5 pl-3.5">
        <IconButton icon="newWizard" label="New" />
        <MenuArrow label="New options" />
        <IconButton icon="save" label="Save" />
        <IconButton icon="print" label="Print" />
        <IconButton icon="play" label="Run" className="ml-4" />
        <MenuArrow label="Run options" />
        <IconButton icon="bug" label="Debug" />
        <MenuArrow label="Debug options" />
        <IconButton icon="profile" label="Profile" />
        <MenuArrow label="Profile options" />
        <IconButton icon="importWeb" label="Export release build" className="mx-0.5" />
        <Separator />
        <IconButton icon="external" label="External tools" />
        <MenuArrow label="External tools options" />
        <IconButton icon="brush" label="Brush" className="ml-4" />
        <IconButton icon="stepDown" label="Next annotation" className="ml-3" />
        <MenuArrow label="Next annotation options" dim />
        <IconButton icon="stepUp" label="Previous annotation" />
        <MenuArrow label="Previous annotation options" dim />
        <IconButton icon="arrowStar" label="Last edit location" />
        <IconButton icon="arrowLeft" label="Back" className="ml-0.5" />
        <MenuArrow label="Back options" />
        <IconButton icon="arrowRightDim" label="Forward" />
        <MenuArrow label="Forward options" dim />
      </div>
      <div className="mt-0.5 mb-1 flex items-center rounded-tl-md border-t border-l border-white pr-9 pl-2">
        <IconButton icon="perspective" label="Open perspective" />
        <button type="button" className="ml-1.5 flex items-center gap-0.5">
          <Icon name="syncDb" />
          Team Synchr...
        </button>
        <button type="button" className="ml-3.5 flex items-center gap-0.5">
          <Icon name="svn" />
          SVN Reposito...
        </button>
        <button type="button" className="ml-3.5 flex items-center gap-0.5">
          <Icon name="flashDebug" />
          Flash Debug
        </button>
        <button type="button" aria-pressed="true" className={`ml-2 flex h-[22px] items-center gap-1 px-1 ${PRESSED}`}>
          <Icon name="fb" />
          Flash
        </button>
      </div>
    </div>
  );
}

function PackageExplorer() {
  return (
    <section className="flex min-h-0 flex-1 flex-col rounded-t border border-[#808080]">
      <TabStrip tabs={[{ icon: "pkgExplorer", label: "Package Explorer", active: true, closable: true }]} />
      <div className="flex min-h-0 flex-1 flex-col px-0.5 pb-0.5">
        <div className="flex h-[26px] shrink-0 items-center justify-end gap-2 border-b border-[#808080] pr-1">
          <IconButton icon="arrowLeftDim" label="Back" />
          <IconButton icon="arrowRightDim" label="Forward" />
          <IconButton icon="upFolder" label="Up" />
          <Separator />
          <IconButton icon="focusTask" label="Focus on active task" />
          <Separator />
          <IconButton icon="collapseAll" label="Collapse all" />
          <IconButton icon="linkEditor" label="Link with editor" />
          <span className="-mt-2"><ViewMenu /></span>
        </div>
        <div className="flex min-h-0 flex-1">
          <Tree rows={PACKAGES} label="Packages" open={[0]} />
          <VBar before="h-1/2" thumb="h-[29%]" label="Packages vertical" />
        </div>
        <HBar thumb="w-[35%]" label="Packages horizontal" />
      </div>
    </section>
  );
}

function Outline() {
  return (
    <section className="flex h-[188px] shrink-0 flex-col rounded-t border border-[#808080]">
      <TabStrip
        tabs={[
          { icon: "outline", label: "Outline", active: true, closable: true },
          { icon: "components", label: "Components" },
        ]}
      />
      <div className="flex min-h-0 flex-1 flex-col px-0.5 pb-0.5">
        <div className="flex h-[26px] shrink-0 items-center justify-end gap-2 border-b border-[#808080] pr-1">
          <IconButton icon="tag" label="Show MXML view" className="h-5 w-5 bg-[#ecebe7]" />
          <IconButton icon="classC" label="Show class view" />
          <Separator />
          <IconButton icon="sortAz" label="Sort" />
          <IconButton icon="hideStatic" label="Hide static" />
          <IconButton icon="dot" label="Hide non-public" />
          <span className="-mt-2"><ViewMenu /></span>
        </div>
        <div className="flex min-h-0 flex-1">
          <Tree rows={OUTLINE} label="Outline" open={[1, 2]} from={1} />
          <VBar before="h-[18%]" thumb="h-[45%]" label="Outline vertical" />
        </div>
        <HBar thumb="w-[80%]" label="Outline horizontal" />
      </div>
    </section>
  );
}

/* ─── Editor ─── */

function Combo({ id, value, className = "", label }: { id?: string; value: string; className?: string; label?: string }) {
  return (
    <span className={`relative flex h-5 items-center ${SUNKEN} ${className}`}>
      <select id={id} aria-label={label} className="h-full w-full appearance-none overflow-hidden bg-transparent pr-4 pl-1 whitespace-nowrap">
        <option>{value}</option>
      </select>
      <span className={`pointer-events-none absolute top-px right-px bottom-px flex w-4 items-center justify-center ${RAISED}`}>
        <Arrow dir="down" />
      </span>
    </span>
  );
}

const HANDLES = ["-top-1 -left-1", "-top-1 left-[calc(50%-3px)]", "-top-1 -right-1", "top-[7px] -left-1", "top-[7px] -right-1", "-bottom-1 -left-1", "-bottom-1 left-[calc(50%-3px)]", "-bottom-1 -right-1"];

const FORM_LABEL = "w-[115px] pr-[17px] text-right whitespace-nowrap";

function DesignForm() {
  return (
    <div className="mt-[122px] ml-[19px] h-[250px] border border-r-0 border-[#6e6e6e] bg-linear-to-b from-[#fcfcfc] via-[#d6d6d6] via-45% to-[#b4b6ba] font-['Liberation_Sans',Arial,sans-serif] text-xs shadow-[0_4px_4px_#6a6a6a]">
      <div className="h-[18px] border-b border-[#dcdad8] bg-linear-to-b from-white to-[#ececec]" />
      <div className="flex flex-col gap-1.5 pt-4 pl-[15px]">
        <div className="flex h-[22px]">
          <label htmlFor="file-name" className={`${FORM_LABEL} -mt-0.5`}>Входной файл:</label>
          <button type="button" className="h-[21px] w-[70px] border-r border-b border-[#4a4a4a] bg-linear-to-b from-white to-[#d6d6d6]">Файл</button>
          <input id="file-name" className="ml-1.5 h-[21px] w-[350px] border-r border-l border-[#5a5a5a] bg-[#fcfcfc]" />
        </div>
        <div className="flex h-[21px] items-center">
          <label htmlFor="section" className={FORM_LABEL}>В раздел:</label>
          <span className="relative flex h-[21px] w-[235px] border border-[#2ea8f0] bg-linear-to-b from-white to-[#d2d2d2]">
            <select id="section" className="w-full appearance-none bg-transparent" />
            <span className="pointer-events-none absolute top-0 right-0 bottom-0 flex w-[18px] items-center justify-center border-l border-[#4a4a4a]">
              <Arrow dir="down" color="#333" />
            </span>
            {HANDLES.map((h) => (
              <span key={h} className={`absolute size-[5px] border border-[#2ea8f0] bg-white ${h}`} />
            ))}
          </span>
        </div>
        <div className="flex h-[22px] items-center">
          <label htmlFor="video-name" className={FORM_LABEL}>Название видео:</label>
          <input id="video-name" defaultValue="{Media.RusName}" className="h-5 w-[430px] border-l border-[#5a5a5a] bg-[#fcfcfc] px-0.5" />
        </div>
        <div className="flex h-[21px] w-[545px] border border-white/30">
          <span className={`${FORM_LABEL} -mt-1`}>Итоговый файл:</span>
          <span className="flex-1 border-l border-white/30" />
        </div>
        <div className="flex h-[21px]">
          <span className="w-[115px] border border-r-0 border-[#d8dce2]" />
          <button type="button" className="w-[70px] border-l border-[#4a4a4a] bg-linear-to-b from-white to-[#d8d8d8]">Convert</button>
        </div>
        <div className="flex h-[21px] w-[134px] border border-[#dcdee2]">
          <span className="w-[115px] border-r border-[#dcdee2]" />
        </div>
      </div>
    </div>
  );
}

function Editor() {
  return (
    <section className="flex min-h-0 flex-1 flex-col overflow-hidden rounded-t border border-[#808080]">
      <TabStrip
        tabs={[
          { icon: "mxml", label: "*SchoolConverter.mxml", active: true, closable: true, tone: "white", pad: "pr-0" },
          { icon: "as", label: "UIComponent.as", pad: "pr-6" },
        ]}
      />
      <div className="flex min-h-0 flex-1 flex-col bg-[#fcfcfc] p-0.5">
        <div className="flex h-[30px] shrink-0 items-center bg-[#d4d0c8] pr-0.5 pb-0.5">
          <div className="flex h-6 rounded border border-[#8c98ac]">
            <button type="button" className="flex items-center gap-1 border-r border-[#8c98ac] bg-linear-to-b from-[#f0efec] to-[#d4d0c8] px-1">
              <Icon name="source" />
              Source
            </button>
            <button type="button" aria-pressed="true" className="flex items-center gap-1 rounded-r bg-[#fcfcfc] px-1">
              <Icon name="design" />
              Design
            </button>
          </div>
          <IconButton icon="sync" label="Refresh" className="ml-1" />
          <IconButton icon="skins" label="Show skins" className="mx-1.5" />
          <Separator />
          <label htmlFor="state" className="mr-1.5 ml-2.5">State:</label>
          <Combo id="state" value="<State1>" className="w-[101px]" />
          <span className="flex-1" />
          <div className="mr-1.5 flex h-6 rounded border border-[#a8a49c]">
            <IconButton icon="cursor" label="Select" className="w-6 bg-[#fcfcfc]" />
            <IconButton icon="hand" label="Pan" className="w-[23px] border-x border-[#a8a49c] bg-[#e4e2dc]" />
            <IconButton icon="magnifier" label="Zoom" className="w-[23px] bg-[#e4e2dc]" />
          </div>
          <Combo label="Zoom level" value="100%" className="w-[57px]" />
        </div>
        <div className="flex min-h-0 flex-1">
          <div className="min-w-0 flex-1 overflow-hidden bg-[#b0b0b0]">
            <DesignForm />
          </div>
          <div className="flex w-3.5 shrink-0 flex-col border-l border-[#606060] bg-[#c4c4c4] px-px">
            <button type="button" aria-label="Scroll up" className="flex h-4 shrink-0 items-center justify-center border-b border-[#606060] bg-[#fcfcfc]">
              <svg viewBox="0 0 6 4" className="h-1 w-1.5" aria-hidden="true"><path d="M0 4h6L3 0z" fill="#555" /></svg>
            </button>
            <div className="flex h-[91%] items-center justify-center border-b border-[#606060] bg-[#fcfcfc]">
              <span className="h-[5px] w-1 border-y border-[#555] bg-linear-to-b from-white via-[#555] to-white" />
            </div>
            <span className="flex-1" />
            <button type="button" aria-label="Scroll down" className="flex h-3.5 shrink-0 items-center justify-center border border-[#606060] bg-[#fcfcfc]">
              <svg viewBox="0 0 6 4" className="h-1 w-1.5" aria-hidden="true"><path d="M0 0h6L3 4z" fill="#555" /></svg>
            </button>
          </div>
        </div>
        <div className="mr-3.5 flex h-[13px] shrink-0 border border-[#606060] bg-[#c4c4c4]">
          <button type="button" aria-label="Scroll left" className="flex w-[15px] items-center justify-center border-r border-[#606060] bg-[#fcfcfc]">
            <svg viewBox="0 0 4 6" className="h-1.5 w-1" aria-hidden="true"><path d="M4 0v6L0 3z" fill="#555" /></svg>
          </button>
          <div className="flex w-[77%] items-center justify-center border-r border-[#606060] bg-[#fcfcfc]">
            <span className="h-1 w-[5px] border-x border-[#555] bg-linear-to-r from-white via-[#555] to-white" />
          </div>
          <span className="flex-1" />
          <button type="button" aria-label="Scroll right" className="flex w-[15px] items-center justify-center border-l border-[#606060] bg-[#fcfcfc]">
            <svg viewBox="0 0 4 6" className="h-1.5 w-1" aria-hidden="true"><path d="M0 0v6l4-3z" fill="#555" /></svg>
          </button>
        </div>
      </div>
    </section>
  );
}

function States() {
  return (
    <section className="flex h-[132px] shrink-0 flex-col rounded-t border border-[#808080]">
      <TabStrip tabs={[{ icon: "stateIcon", label: "States", active: true, closable: true }]}>
        <div className="-mt-0.5 flex gap-2">
          <IconButton icon="newState" label="New state" />
          <IconButton icon="pencil" label="Edit state" />
          <IconButton icon="trash" label="Delete state" />
        </div>
        <MinMax />
      </TabStrip>
      <ul className="m-0.5 flex-1 bg-[#fcfcfc] pl-5">
        <li className="flex h-[17px] items-center gap-1.5">
          <Icon name="stateIcon" />
          &lt;State1&gt;
        </li>
      </ul>
    </section>
  );
}

/* ─── Properties ─── */

function SectionHeader({ title }: { title: string }) {
  return (
    <h2 className="flex h-4 items-center gap-1 bg-linear-to-b from-[#fafafa] to-[#d0d2da] pl-0.5">
      <svg viewBox="0 0 9 5" className="h-[5px] w-[9px]" aria-hidden="true">
        <path d="M0 0h9L4.500 5z" />
      </svg>
      {title}
    </h2>
  );
}

const PROP_LABEL = "mr-1 w-[86px] shrink-0 text-right whitespace-nowrap";

function Field({ id, label, value = "", width = "w-[178px]", row = "h-6", children }: { id: string; label: string; value?: string; width?: string; row?: string; children?: ReactNode }) {
  return (
    <div className={`relative flex items-center ${row}`}>
      <label htmlFor={id} className={PROP_LABEL}>{label}</label>
      <input id={id} defaultValue={value} className={`h-[19px] px-1 ${SUNKEN} ${width}`} />
      {children}
    </div>
  );
}

function Divider({ title, row }: { title: string; row: string }) {
  return (
    <h3 className={`flex items-center gap-2 ${row}`}>
      <span className="h-px flex-1 bg-[repeating-linear-gradient(90deg,#808080_0_1px,transparent_1px_4px)]" />
      {title}
      <span className="h-px flex-1 bg-[repeating-linear-gradient(90deg,#808080_0_1px,transparent_1px_4px)]" />
    </h3>
  );
}

function Swatch({ label, color, width = "w-[59px]" }: { label: string; color: string; width?: string }) {
  return (
    <label className="flex items-center">
      <span className={`mr-1 shrink-0 text-right ${width}`}>{label}</span>
      <button type="button" aria-label={`${label} picker`} className={`h-[19px] w-[57px] border-2 border-white outline outline-1 -outline-offset-1 outline-[#808080] ${color}`} />
    </label>
  );
}

function Alpha({ id, width }: { id: string; width: string }) {
  return (
    <>
      <label htmlFor={id} className={`mr-1 shrink-0 text-right ${width}`}>Alpha:</label>
      <input id={id} defaultValue="100%" className={`h-[19px] w-[57px] px-1 text-right text-[#808080] italic ${SUNKEN}`} />
      <button type="button" aria-label="Alpha options" className={`ml-0.5 flex size-4 items-center justify-center ${RAISED}`}>
        <Arrow dir="down" />
      </button>
    </>
  );
}

function Check({ label }: { label: string }) {
  return (
    <label className="flex items-center gap-1.5">
      <span className="relative flex">
        <input type="checkbox" defaultChecked className={`size-3 appearance-none ${SUNKEN}`} />
        <svg viewBox="0 0 12 12" className="pointer-events-none absolute inset-0 size-3" aria-hidden="true">
          <path d="M3 5.500l2 2 4-4" fill="none" stroke="#000" strokeWidth="1.800" />
        </svg>
      </span>
      {label}
    </label>
  );
}

const VALIGN = ["M3 3.500h10M5 6h6M3 8.500h10", "M3 6h8M5 8.500h8M3 11h10", "M5 7.500h6M3 10h10M3 12.500h10", "M3 3.500h10M3 7h10M3 10.500h10M3 13h10"];
const HALIGN = ["M2 3.500h12M2 5.500h8M2 7.500h12M2 9.500h8M2 11.500h10", "M2 3.500h12M4 5.500h8M2 7.500h12M4 9.500h8M5 11.500h6", "M2 3.500h12M6 5.500h8M2 7.500h12M6 9.500h8M4 11.500h10"];

function Properties() {
  return (
    <section className="flex w-[304px] shrink-0 flex-col rounded-t border border-[#808080]">
      <TabStrip
        tabs={[
          { icon: "properties", label: "Properties", active: true, closable: true, tone: "blue", pad: "pr-0" },
          { icon: "palette", label: "Appearance" },
        ]}
      >
        <div className="-mt-1 flex flex-1 items-center justify-end gap-1">
          <IconButton icon="category" label="Standard view" className={`h-[21px] w-[22px] ${PRESSED}`} />
          <IconButton icon="listView" label="Category view" className="w-5" />
          <IconButton icon="alphaView" label="Alphabetical view" className="w-5" />
        </div>
        <MinMax />
      </TabStrip>
      <div className="flex min-h-0 flex-1 flex-col border-2 border-[#9fafd2]">
        <p className="flex h-[27px] shrink-0 items-center gap-1.5 border-b border-[#808080]">
          <Icon name="dropDown" />
          s:DropDownList
        </p>
        <div className="flex min-h-0 flex-1">
          <form className="min-w-0 flex-1 overflow-hidden border-r border-white">
            <SectionHeader title="Common" />
            <div className="mt-[3px]">
              <Field id="p-id" label="ID:" />
              <Field id="p-states" label="In states:" value="All States" />
              <Field id="p-prompt" label="Prompt:" />
              <Field id="p-provider" label="Data provider:" width="w-[138px]" row="h-[26px]">
                <IconButton icon="link" label="Bind" className="mx-1.5" />
                <MenuArrow label="Bind options" />
              </Field>
              <Field id="p-index" label="Selected index:" row="h-[26px]">
                <div role="menu" className={`absolute top-0 right-3.5 z-10 w-[103px] p-0.5 ${RAISED}`}>
                  <button type="button" role="menuitem" className="h-[17px] w-full bg-[#0a246a] pr-1.5 text-center text-white">Bind to Data</button>
                  <svg viewBox="0 0 12 20" className="absolute top-3.5 -right-1 h-5 w-3" aria-hidden="true">
                    <path d="M.5.500v15.500l3.500-3.500 2.700 6.500 2.300-1-2.700-6H11z" fill="#fff" stroke="#000" />
                  </svg>
                </div>
              </Field>
              <div className="flex h-[26px] items-center">
                <label htmlFor="p-enabled" className={PROP_LABEL}>Enabled:</label>
                <Combo id="p-enabled" value="" className="w-[53px]" />
              </div>
              <Field id="p-change" label="On change:" width="w-[138px]" row="h-[26px]">
                <IconButton icon="lightning" label="Generate handler" className="mx-1.5" />
                <MenuArrow label="Handler options" />
              </Field>
              <div className="flex h-7 items-center">
                <label htmlFor="p-renderer" className={PROP_LABEL}>Item renderer:</label>
                <Combo id="p-renderer" value="<Default>" className="w-[138px]" />
                <IconButton icon="brick" label="Renderer" className="mx-1.5" />
                <MenuArrow label="Renderer options" />
              </div>
            </div>
            <div className="mt-2">
              <SectionHeader title="Style" />
            </div>
            <div className="mt-1 flex h-8 items-center">
              <label htmlFor="p-skin" className="mr-2 w-[41px] text-right">Skin:</label>
              <Combo id="p-skin" value="spark.skins.spark.DropDownListSkin" className="w-[167px]" />
              <IconButton icon="paintGear" label="Skin actions" className="mx-2" />
              <MenuArrow label="Skin options" />
            </div>
            <div className="flex h-8 items-center">
              <label htmlFor="p-style" className="mr-1 w-[45px] text-right">Style:</label>
              <Combo id="p-style" value="<Default style>" className="w-[167px]" />
              <IconButton icon="pencilGrid" label="Style actions" className="mx-2" />
              <MenuArrow label="Style options" dim />
            </div>
            <div className="flex h-6 items-center pl-[88px]">
              <button type="button" disabled className={`h-[23px] w-[98px] text-[#808080] [text-shadow:1px_1px_#fff] ${RAISED}`}>Convert to CSS...</button>
            </div>
            <Divider title="Text" row="h-6" />
            <div className="flex h-[26px] items-center pl-3">
              <Combo label="Font family" value="Arial" className="w-[105px] text-[#808080] italic" />
              <input aria-label="Font size" defaultValue="12" className={`ml-1.5 h-[19px] w-[37px] px-1 text-right text-[#808080] italic ${SUNKEN}`} />
              <button type="button" aria-label="Font size options" className={`flex size-4 items-center justify-center ${RAISED}`}>
                <Arrow dir="down" />
              </button>
              <button type="button" aria-label="Text color" className="ml-8 h-[19px] w-[57px] border-2 border-white bg-black outline outline-1 -outline-offset-1 outline-[#808080]" />
            </div>
            <div className="flex h-6 items-center pl-3.5">
              <div className="flex h-[18px] w-20 divide-x divide-[#b0aca4] border border-[#b0aca4] bg-[#ecebe7] text-center font-['Liberation_Serif',serif] text-[13px] leading-4">
                <button type="button" aria-label="Bold" className="flex-1 font-bold">T</button>
                <button type="button" aria-label="Italic" className="flex-1 italic">T</button>
                <button type="button" aria-label="Underline" className="flex-1 font-bold underline">T</button>
                <button type="button" aria-label="Strikethrough" className="flex-1 font-bold line-through">T</button>
              </div>
              <div className="ml-7 flex">
                {VALIGN.map((d) => (
                  <button key={d} type="button" aria-label="Vertical align" className="flex w-5 justify-center">
                    <svg viewBox="0 0 16 16" className="size-4" aria-hidden="true"><path d={d} stroke="#808080" /></svg>
                  </button>
                ))}
              </div>
              <div className="ml-1.5 flex h-[18px] w-[61px] divide-x divide-[#b0aca4] border border-[#b0aca4] bg-[#ecebe7]">
                {HALIGN.map((d) => (
                  <button key={d} type="button" aria-label="Text align" className="flex flex-1 justify-center">
                    <svg viewBox="0 0 16 16" className="size-4" aria-hidden="true"><path d={d} stroke="#333" /></svg>
                  </button>
                ))}
              </div>
            </div>
            <Divider title="Content Background" row="h-[26px]" />
            <div className="flex h-6 items-center">
              <Swatch label="Color:" color="bg-[#fcfcfc]" />
              <Alpha id="p-alpha" width="w-[46px]" />
            </div>
            <Divider title="Color" row="h-[22px]" />
            <div className="flex h-6 items-center">
              <Swatch label="Chrome:" color="bg-[#cccccc]" />
              <Swatch label="Focus:" color="bg-[#70b2ee]" width="w-[52px]" />
            </div>
            <div className="flex h-6 items-center">
              <Swatch label="Selection:" color="bg-[#a8c6ee]" />
              <Swatch label="Symbol:" color="bg-black" width="w-[52px]" />
            </div>
            <div className="flex h-6 items-center">
              <Swatch label="Rollover:" color="bg-[#ced6e4]" />
            </div>
            <Divider title="Border" row="h-[22px]" />
            <div className="flex h-[22px] items-center gap-14 pl-[45px]">
              <Check label="Visible" />
              <Check label="Drop shadow" />
            </div>
            <div className="flex h-6 items-center">
              <Swatch label="Color:" color="bg-[#696969]" width="w-[50px]" />
              <Alpha id="p-border-alpha" width="w-[60px]" />
            </div>
            <div className="flex pt-0.5 pl-[54px]">
              <input aria-label="Border weight" className={`h-[19px] w-[57px] ${SUNKEN}`} />
              <span className={`ml-0.5 size-4 ${RAISED}`} />
              <input aria-label="Corner radius" className={`ml-[46px] h-[19px] w-[57px] ${SUNKEN}`} />
              <span className={`ml-0.5 size-4 ${RAISED}`} />
            </div>
          </form>
          <VBar before="h-0" thumb="h-[83%]" label="Properties vertical" />
        </div>
      </div>
    </section>
  );
}

function BottomPanel() {
  return (
    <section className="mx-1 mt-1 flex h-[180px] shrink-0 flex-col rounded-t border border-[#808080]">
      <TabStrip
        tabs={[
          { icon: "problems", label: "Problems" },
          { icon: "monitor", label: "Network Monitor" },
          { icon: "search", label: "Search" },
          { icon: "console", label: "Console" },
          { icon: "history", label: "History" },
          { icon: "gears", label: "Data/Services", active: true, closable: true },
          { icon: "hierarchy", label: "Call Hierarchy" },
          { icon: "syncDb", label: "Synchronize" },
          { icon: "progress", label: "Progress" },
          { icon: "testOp", label: "Test Operation" },
        ]}
      >
        <div className="-mt-1 flex h-5 items-center gap-2">
          <IconButton icon="gearsFind" label="Show services" className={`h-5 w-[21px] ${PRESSED}`} />
          <IconButton icon="gearsSync" label="Refresh services" />
          <IconButton icon="gearsNew" label="New service" />
          <Separator className="-mx-0.5" />
          <IconButton icon="typeClock" label="Return type" />
          <IconButton icon="testOp" label="Test operation" />
          <Separator />
          <IconButton icon="gearsCode" label="Service code" />
          <IconButton icon="filmstrip" label="Bind to chart" />
          <IconButton icon="docGear" label="Generate form" />
        </div>
        <ViewMenu />
        <MinMax />
      </TabStrip>
      <div className="flex min-h-0 flex-1 p-0.5">
        <Tree rows={SERVICES} label="Data and services" />
      </div>
    </section>
  );
}

export default function App() {
  return (
    <div
      id="workbench"
      className="flex h-screen flex-col overflow-hidden bg-[#d4d0c8] font-['DejaVu_Sans_Condensed','DejaVu_Sans',sans-serif] text-[11px] leading-[14px] text-black"
    >
      <TitleBar />
      <MenuBar />
      <ToolBar />
      <main className="flex min-h-0 flex-1 gap-1 px-1">
        <div className="flex w-[267px] shrink-0 flex-col gap-1">
          <PackageExplorer />
          <Outline />
        </div>
        <div className="flex min-w-0 flex-1 flex-col gap-1">
          <Editor />
          <States />
        </div>
        <Properties />
      </main>
      <BottomPanel />
      <footer className="flex h-8 shrink-0 items-center px-1.5">
        <Separator />
        <IconButton icon="fastView" label="Show view as a fast view" className="ml-1.5" />
        <span className="flex-1" />
        <Separator className="mr-[242px]" />
      </footer>
    </div>
  );
}
